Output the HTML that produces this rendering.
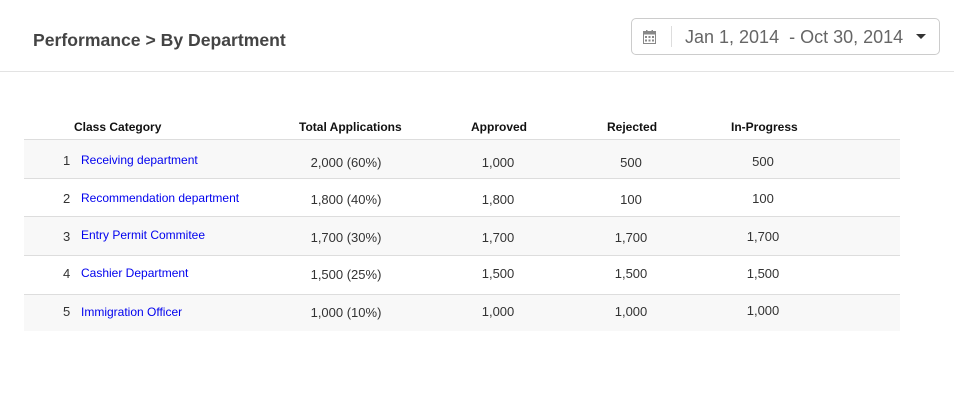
<!DOCTYPE html>
<html><head><meta charset="utf-8"><style>
body{margin:0;width:954px;height:412px;background:#fff;font-family:"Liberation Sans",sans-serif;position:relative;overflow:hidden}
.a{position:absolute;white-space:nowrap}
.title{left:33px;top:30px;font-size:17.6px;font-weight:bold;color:#444}
.hr{left:0;top:71px;width:954px;height:1px;background:#e3e3e3}
.dp{left:631px;top:18px;width:309px;height:37px;border:1px solid #ccc;border-radius:5px;box-sizing:border-box}
.h{top:120px;font-size:12px;font-weight:bold;color:#111}
.row{left:24px;width:876px;border-top:1px solid #ddd}
.n{font-size:13px;color:#333}
.l{font-size:12px;color:#0000ee}
.c{transform:translateX(-50%);font-size:13px;color:#333}
</style></head><body>
<div class="a title">Performance &gt; By Department</div>
<div class="a hr"></div>
<div class="a dp">
<svg class="a" style="left:11px;top:11px" width="13" height="14" viewBox="0 0 13 14"><rect x="0.5" y="1.5" width="12" height="12" fill="none" stroke="#888"/><rect x="0.5" y="1.5" width="12" height="3" fill="#888"/><rect x="3" y="0" width="1.5" height="2" fill="#888"/><rect x="8.5" y="0" width="1.5" height="2" fill="#888"/><g fill="#888"><rect x="2" y="6" width="2" height="2"/><rect x="5.5" y="6" width="2" height="2"/><rect x="9" y="6" width="2" height="2"/><rect x="2" y="9.5" width="2" height="2"/><rect x="5.5" y="9.5" width="2" height="2"/><rect x="9" y="9.5" width="2" height="2"/></g></svg>
<div class="a" style="left:39px;top:7px;width:1px;height:21px;background:#ddd"></div>
<div class="a" style="left:53px;top:8px;font-size:18px;color:#666">Jan 1, 2014&nbsp; - Oct 30, 2014</div>
<div class="a" style="left:284px;top:15px;width:0;height:0;border-left:5px solid transparent;border-right:5px solid transparent;border-top:5px solid #333"></div>
</div>
<div class="a h" style="left:74px">Class Category</div>
<div class="a h" style="left:299px">Total Applications</div>
<div class="a h" style="left:471px">Approved</div>
<div class="a h" style="left:607px">Rejected</div>
<div class="a h" style="left:731px">In-Progress</div>

<div class="a row" style="top:139px;height:39px;background:#f8f8f8"></div>
<div class="a row" style="top:178px;height:38px"></div>
<div class="a row" style="top:216px;height:39px;background:#f8f8f8"></div>
<div class="a row" style="top:255px;height:39px"></div>
<div class="a row" style="top:294px;height:36px;background:#f8f8f8"></div>

<div class="a n" style="left:63px;top:153px">1</div><div class="a l" style="left:81px;top:153px">Receiving department</div>
<div class="a c" style="left:346px;top:155px">2,000 (60%)</div><div class="a c" style="left:498px;top:155px">1,000</div><div class="a c" style="left:631px;top:155px">500</div><div class="a c" style="left:763px;top:154px">500</div>

<div class="a n" style="left:63px;top:191px">2</div><div class="a l" style="left:81px;top:191px">Recommendation department</div>
<div class="a c" style="left:346px;top:192px">1,800 (40%)</div><div class="a c" style="left:498px;top:192px">1,800</div><div class="a c" style="left:631px;top:192px">100</div><div class="a c" style="left:763px;top:191px">100</div>

<div class="a n" style="left:63px;top:229px">3</div><div class="a l" style="left:81px;top:228px">Entry Permit Commitee</div>
<div class="a c" style="left:346px;top:230px">1,700 (30%)</div><div class="a c" style="left:498px;top:230px">1,700</div><div class="a c" style="left:631px;top:230px">1,700</div><div class="a c" style="left:763px;top:229px">1,700</div>

<div class="a n" style="left:63px;top:266px">4</div><div class="a l" style="left:81px;top:266px">Cashier Department</div>
<div class="a c" style="left:346px;top:267px">1,500 (25%)</div><div class="a c" style="left:498px;top:266px">1,500</div><div class="a c" style="left:631px;top:266px">1,500</div><div class="a c" style="left:763px;top:266px">1,500</div>

<div class="a n" style="left:63px;top:304px">5</div><div class="a l" style="left:81px;top:305px">Immigration Officer</div>
<div class="a c" style="left:346px;top:305px">1,000 (10%)</div><div class="a c" style="left:498px;top:304px">1,000</div><div class="a c" style="left:631px;top:304px">1,000</div><div class="a c" style="left:763px;top:303px">1,000</div>
</body></html>
